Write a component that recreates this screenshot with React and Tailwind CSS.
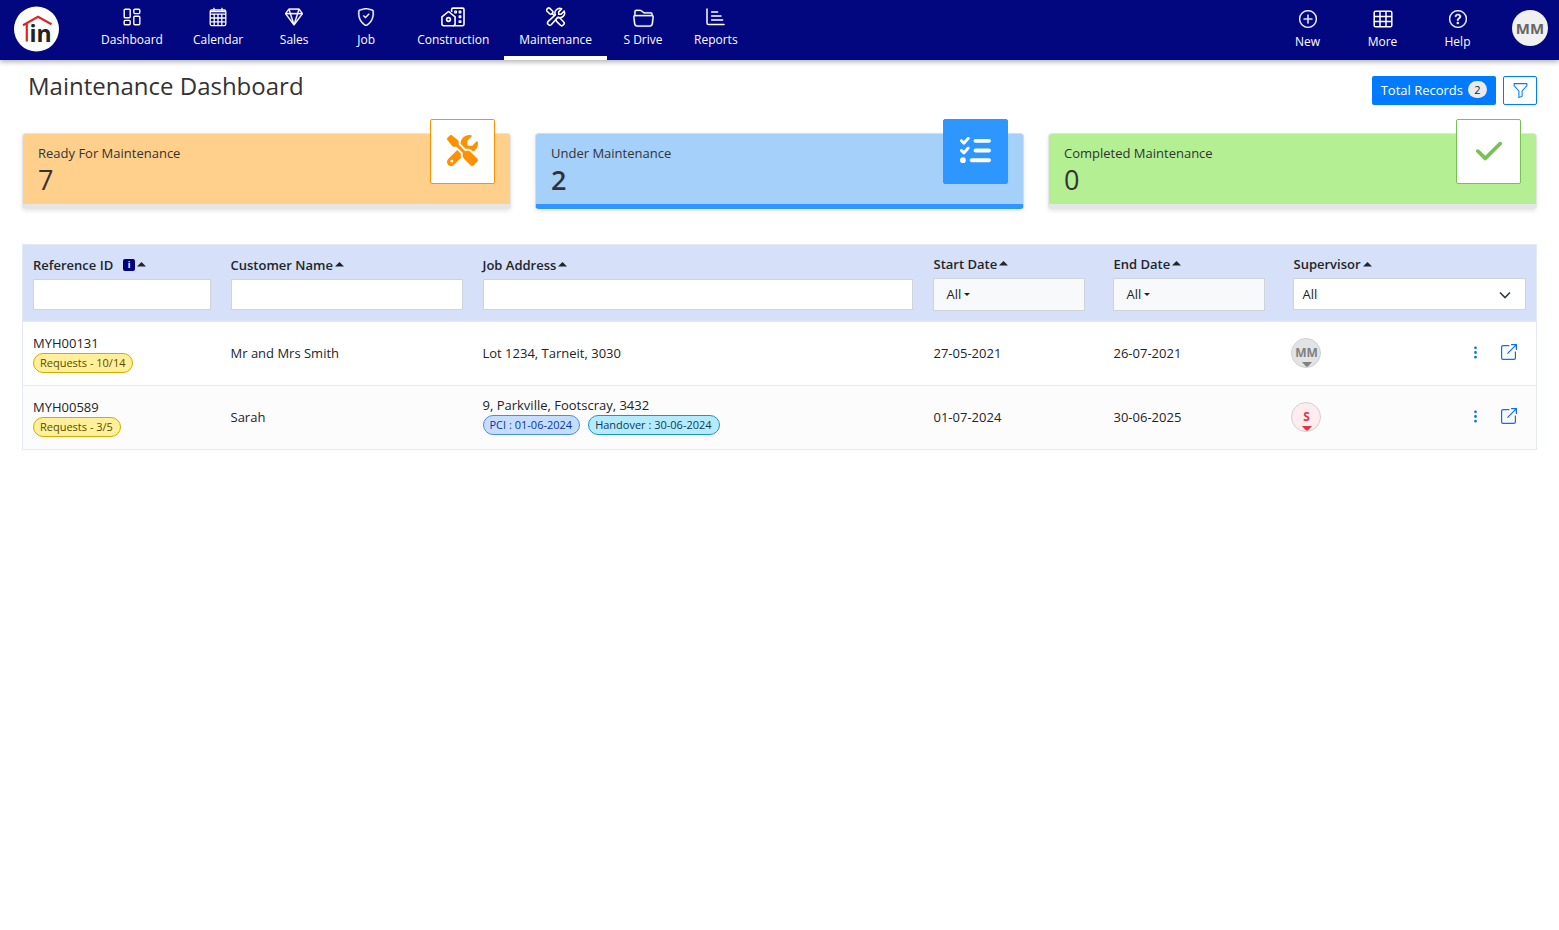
import { BsFolder2Open, BsFunnel, BsGem, BsPlusCircle, BsQuestionCircle, BsShieldCheck, BsThreeDotsVertical } from 'react-icons/bs';
import { FaCheck, FaListCheck, FaScrewdriverWrench } from 'react-icons/fa6';

function DashboardIcon() {
  return (
    <svg width="18" height="18" viewBox="0 0 18 18" fill="none" stroke="currentColor" strokeWidth="1.4">
      <rect x="1.2" y="1.2" width="6" height="8.600" rx="1" />
      <rect x="1.2" y="12.400" width="6" height="4.400" rx="1" />
      <rect x="10.800" y="1.2" width="6" height="4.400" rx="1" />
      <rect x="10.800" y="8.200" width="6" height="8.600" rx="1" />
    </svg>
  );
}

function CalendarIcon() {
  return (
    <svg width="18" height="20" viewBox="0 0 18 20" fill="none" stroke="currentColor" strokeWidth="1.3">
      <rect x="1.2" y="3" width="15.6" height="15.6" rx="1.6" />
      <path d="M1.2 4.6h15.6M1.2 7.2h15.6M1.2 11h15.6M1.2 14.8h15.6M5.2 7.2v11.4M9 7.2v11.4M12.8 7.2v11.4M5 .8v3.6M13 .8v3.6" />
    </svg>
  );
}

function ConstructionIcon() {
  return (
    <svg width="24" height="20" viewBox="0 0 24 20" fill="none" stroke="currentColor" strokeWidth="1.6" strokeLinejoin="round">
      <path d="M.9 9.800 7.500 4.500l6.600 5.300v7a1.900 1.900 0 0 1-1.900 1.900H2.800A1.900 1.900 0 0 1 .9 16.800z" />
      <circle cx="7.500" cy="12.500" r="1.900" />
      <path d="M10.600 5V2.600a1.500 1.500 0 0 1 1.500-1.500h9.400A1.500 1.500 0 0 1 23 2.600v14.600a1.500 1.500 0 0 1-1.500 1.500h-9.700" />
      <path d="M13.800 4.200h1.600v1.600h-1.600zM18.200 4.200h1.600v1.600h-1.600zM18.200 9h1.600v1.600h-1.600zM18.200 13.800h1.600v1.600h-1.600z" strokeWidth="1.3" />
    </svg>
  );
}

// the handle is filled so that it covers the crossing lines
function ToolsIcon() {
  return (
    <svg width="20" height="20" viewBox="0 0 24 24" fill="none" stroke="currentColor" strokeWidth="1.900" strokeLinejoin="round">
      <path d="M7 7.400 14 14.400" />
      <rect x="0.500" y="2.500" width="8" height="4.800" rx="1.800" transform="rotate(45 4.500 4.900)" />
      <path
        className="fill-[#03077f]"
        d="M15.200 5.800v2.900h2.900l3.700-3.700a5.600 5.600 0 0 1-7.600 7.300l-7.700 8.700a2.600 2.600 0 0 1-3.800-3.700l8.500-7.800a5.600 5.600 0 0 1 7.500-7.300z"
      />
      <rect className="fill-[#03077f]" x="11.500" y="14.800" width="11" height="5.600" rx="2.600" transform="rotate(45 17 17.600)" />
    </svg>
  );
}

function ReportsIcon() {
  return (
    <svg width="19" height="18" viewBox="0 0 19 18" fill="none" stroke="currentColor" strokeWidth="1.5" strokeLinecap="round">
      <path d="M1 1v14a1.600 1.600 0 0 0 1.600 1.600H18M5.600 4h6M5.600 8h9.400M5.600 12h11" />
    </svg>
  );
}

function GridIcon() {
  return (
    <svg width="20" height="20" viewBox="0 0 20 20" fill="none" stroke="currentColor" strokeWidth="1.5">
      <rect x="1.200" y="2.200" width="17.600" height="15.600" rx="1.400" />
      <path d="M1.200 7.400h17.600M1.200 12.600h17.600M7 2.200v15.600M13 2.200v15.600" />
    </svg>
  );
}

function OpenIcon() {
  return (
    <svg width="16" height="16" viewBox="0 0 16 16" fill="none" stroke="currentColor" strokeWidth="1.200">
      <path d="M8.400 1.600H2A1.400 1.400 0 0 0 .6 3v11A1.400 1.400 0 0 0 2 15.400h11a1.400 1.400 0 0 0 1.400-1.400V7.600M6.400 9.600 15.200.8M10 .6h5.400V6" />
    </svg>
  );
}

function Logo() {
  return (
    <svg width="46" height="46" viewBox="0 0 46 46" aria-label="Home">
      <circle cx="23.500" cy="23" r="22.500" fill="#fff" />
      <path d="M10 19.200 25 10.800l13.500 7.400M13.800 17.500V35.500" fill="none" stroke="#e02424" strokeWidth="2.200" />
      <text x="16.500" y="35.500" className="font-bold" fontSize="23" fill="#222">in</text>
    </svg>
  );
}

const NAV_ITEMS = [
  { label: 'Dashboard', icon: <DashboardIcon /> },
  { label: 'Calendar', icon: <CalendarIcon /> },
  { label: 'Sales', icon: <BsGem size={18} className="stroke-[0.3]" /> },
  { label: 'Job', icon: <BsShieldCheck size={18} className="stroke-[0.3]" /> },
  { label: 'Construction', icon: <ConstructionIcon /> },
  { label: 'Maintenance', icon: <ToolsIcon />, active: true },
  { label: 'S Drive', icon: <BsFolder2Open size={21} className="stroke-[0.2]" /> },
  { label: 'Reports', icon: <ReportsIcon /> },
];

const ACTIONS = [
  { label: 'New', icon: <BsPlusCircle size={18} className="stroke-[0.3]" /> },
  { label: 'More', icon: <GridIcon /> },
  { label: 'Help', icon: <BsQuestionCircle size={18} className="stroke-[0.3]" /> },
];

const CARDS = [
  {
    label: 'Ready For Maintenance',
    count: 7,
    icon: <FaScrewdriverWrench size={31} />,
    card: 'bg-[#ffd08c] border-[#e5e5e5]',
    box: 'bg-white border-[#ff9100] text-[#ff9100]',
  },
  {
    label: 'Under Maintenance',
    count: 2,
    icon: <FaListCheck size={31} />,
    card: 'bg-[#a5d0fa] border-t-[#d5dde5] border-x-[#d5dde5] border-b-[#2e96ff]',
    box: 'bg-[#2e96ff] border-[#2e96ff] text-white',
    active: true,
  },
  {
    label: 'Completed Maintenance',
    count: 0,
    icon: <FaCheck size={30} />,
    card: 'bg-[#b4ef94] border-[#e5e5e5]',
    box: 'bg-white border-[#76c353] text-[#76c353]',
  },
];

const ROWS = [
  {
    id: 'MYH00131',
    requests: '10/14',
    customer: 'Mr and Mrs Smith',
    address: 'Lot 1234, Tarneit, 3030',
    tags: [],
    start: '27-05-2021',
    end: '26-07-2021',
    initials: 'MM',
    avatar: 'bg-[#e2e3e5] text-[#808080]',
  },
  {
    id: 'MYH00589',
    requests: '3/5',
    customer: 'Sarah',
    address: '9, Parkville, Footscray, 3432',
    tags: [
      { text: 'PCI : 01-06-2024', style: 'bg-[#c5deff] border-[#4a8ee0] text-[#0a34a0]' },
      { text: 'Handover : 30-06-2024', style: 'bg-[#b5ebff] border-[#1c94cc] text-[#0b3a55]' },
    ],
    start: '01-07-2024',
    end: '30-06-2025',
    initials: 'S',
    avatar: 'bg-[#ffecee] text-[#dc3545]',
  },
];

function SortLabel({ children, htmlFor, info }) {
  return (
    <div className="flex items-center gap-0.5 h-5 mb-1 font-semibold">
      <label htmlFor={htmlFor}>{children}</label>
      {info && (
        <span className="ml-2 w-3 h-3 rounded-xs bg-[#000080] text-white text-[9px] leading-3 text-center font-bold">i</span>
      )}
      <svg width="9" height="5" viewBox="0 0 9 5" fill="currentColor">
        <path d="M4.500 0 9 4.500H0z" />
      </svg>
    </div>
  );
}

function DateFilter({ id }) {
  return (
    <button id={id} className="flex items-center gap-[3px] w-full h-[33px] px-3 bg-[#f8f9fa] border border-[#ced4da] text-left">
      All
      <svg width="6" height="3" viewBox="0 0 6 3" fill="currentColor">
        <path d="M0 0h6L3 3z" />
      </svg>
    </button>
  );
}

function Pill({ className, children }) {
  return (
    <span className={`block w-fit h-5 pl-1.5 pr-[7px] rounded-full border text-[11px] leading-[18px] ${className}`}>
      {children}
    </span>
  );
}

export default function App() {
  return (
    <div className="min-h-screen bg-white font-['Open_Sans',sans-serif] text-[13px] leading-5 text-[#212529]">
      <header className="flex justify-between h-[60px] bg-[#03077f] text-white text-xs shadow-[0_2px_5px_rgba(0,0,0,0.3)]">
        <div className="flex">
          <a href="#" className="w-[86px] pl-[13px] pt-1.5">
            <Logo />
          </a>
          <nav className="flex">
            {NAV_ITEMS.map((item) => (
              <a
                key={item.label}
                href="#"
                className={`flex flex-col items-center min-w-[72px] px-[15px] pt-[7px] border-b-4 font-medium ${item.active ? 'border-white' : 'border-transparent'}`}
              >
                <span className="flex items-center h-5">{item.icon}</span>
                <span className="mt-1 leading-[18px]">{item.label}</span>
              </a>
            ))}
          </nav>
        </div>
        <div className="flex pr-[11px]">
          {ACTIONS.map((item) => (
            <button key={item.label} className="flex flex-col items-center w-[75px] pt-[9px] font-medium">
              <span className="flex items-center h-5">{item.icon}</span>
              <span className="mt-1 leading-[18px]">{item.label}</span>
            </button>
          ))}
          <button className="self-center w-9 h-9 ml-[17px] mb-1 rounded-full bg-[#f0f0f0] text-[#666] text-[15px] font-bold">
            MM
          </button>
        </div>
      </header>

      <main className="px-[22px] pt-4">
        <div className="flex justify-between">
          <h1 className="pl-1.5 -mt-1 text-2xl leading-7 text-[#333]">Maintenance Dashboard</h1>
          <div className="flex gap-[7px]">
            <button className="flex items-center gap-[5px] h-[29px] px-[9px] pb-0.5 rounded-xs bg-[#007bff] text-white">
              Total Records
              <span className="w-[19px] h-[17px] rounded-full bg-[#ebebeb] text-[#212529] text-[11px] leading-[17px]">2</span>
            </button>
            <button aria-label="Filter" className="flex items-center justify-center w-[34px] h-[29px] rounded-xs border border-[#007bff] text-[#007bff]">
              <BsFunnel size={17} />
            </button>
          </div>
        </div>

        <div className="grid grid-cols-3 gap-6 mt-7">
          {CARDS.map((card) => (
            <section
              key={card.label}
              className={`relative h-[76px] pl-[15px] pt-[9px] rounded border border-b-[5px] shadow-[0_2px_4px_rgba(0,0,0,0.1)] text-[#333] ${card.card}`}
            >
              <h2>{card.label}</h2>
              <p className={`text-[27px] leading-[34px] ${card.active ? 'font-semibold' : ''}`}>{card.count}</p>
              <span className={`absolute -top-[15px] right-[15px] flex items-center justify-center size-[65px] pb-0.5 rounded-xs border ${card.box}`}>
                {card.icon}
              </span>
            </section>
          ))}
        </div>

        <table className="w-full mt-[35px] table-fixed border-collapse border border-[#e3eaf5] text-left">
          <colgroup>
            <col className="w-[198px]" />
            <col className="w-[252px]" />
            <col />
            <col className="w-[180px]" />
            <col className="w-[180px]" />
            <col className="w-[120px]" />
            <col className="w-[133px]" />
          </colgroup>
          <thead className="bg-[#d6e0f9]">
            <tr className="h-[77px] border-b border-[#e3eaf5]">
              <th className="px-[10px] pb-0.5 font-normal">
                <SortLabel htmlFor="reference" info>Reference ID</SortLabel>
                <input id="reference" className="block w-full h-[31px] px-2 bg-white border border-[#ced4da]" />
              </th>
              <th className="px-[10px] pb-0.5 font-normal">
                <SortLabel htmlFor="customer">Customer Name</SortLabel>
                <input id="customer" className="block w-full h-[31px] px-2 bg-white border border-[#ced4da]" />
              </th>
              <th className="px-[10px] pb-0.5 font-normal">
                <SortLabel htmlFor="address">Job Address</SortLabel>
                <input id="address" className="block w-full h-[31px] px-2 bg-white border border-[#ced4da]" />
              </th>
              <th className="pl-[10px] pr-[18px] pb-0.5 font-normal">
                <SortLabel htmlFor="start">Start Date</SortLabel>
                <DateFilter id="start" />
              </th>
              <th className="pl-[10px] pr-[18px] pb-0.5 font-normal">
                <SortLabel htmlFor="end">End Date</SortLabel>
                <DateFilter id="end" />
              </th>
              <th colSpan={2} className="px-[10px] pb-0.5 font-normal">
                <SortLabel htmlFor="supervisor">Supervisor</SortLabel>
                <div className="relative">
                  <select id="supervisor" className="block w-full h-8 px-2 appearance-none bg-white border border-[#ced4da]">
                    <option>All</option>
                  </select>
                  <svg width="12" height="12" viewBox="0 0 12 12" fill="none" stroke="#343a40" strokeWidth="1.600" className="absolute right-[15px] top-[11px] pointer-events-none">
                    <path d="m1 3.500 5 5 5-5" />
                  </svg>
                </div>
              </th>
            </tr>
          </thead>
          <tbody>
            {ROWS.map((row) => (
              <tr key={row.id} className="h-16 border-b border-[#e3eaf5] even:bg-[#fcfcfc]">
                <td className="px-[10px] pb-0.5">
                  <div>{row.id}</div>
                  <Pill className="bg-[#fff099] border-[#d6ab00] text-[#5c4a00]">Requests - {row.requests}</Pill>
                </td>
                <td className="px-[10px] pb-0.5">{row.customer}</td>
                <td className={`px-[10px] ${row.tags.length > 0 ? 'pb-1.5' : 'pb-0.5'}`}>
                  <div>{row.address}</div>
                  {row.tags.length > 0 && (
                    <div className="flex gap-2">
                      {row.tags.map((tag) => (
                        <Pill key={tag.text} className={tag.style}>{tag.text}</Pill>
                      ))}
                    </div>
                  )}
                </td>
                <td className="px-[10px] pb-0.5">{row.start}</td>
                <td className="px-[10px] pb-0.5">{row.end}</td>
                <td className="px-2 pb-0.5">
                  <button className={`relative block size-[30px] rounded-full border border-[#d0d0d0] text-xs font-bold ${row.avatar}`}>
                    {row.initials}
                    <svg width="10" height="5" viewBox="0 0 10 5" fill="currentColor" className="absolute left-[10px] bottom-0">
                      <path d="M0 0h10L6 4.500H4z" />
                    </svg>
                  </button>
                </td>
                <td className="pr-[19px] pb-[3px] text-[#0d6efd]">
                  <div className="flex items-center justify-end gap-[18px]">
                    <button aria-label="More actions"><BsThreeDotsVertical size={15} /></button>
                    <a href="#" aria-label="Open record"><OpenIcon /></a>
                  </div>
                </td>
              </tr>
            ))}
          </tbody>
        </table>
      </main>
    </div>
  );
}
